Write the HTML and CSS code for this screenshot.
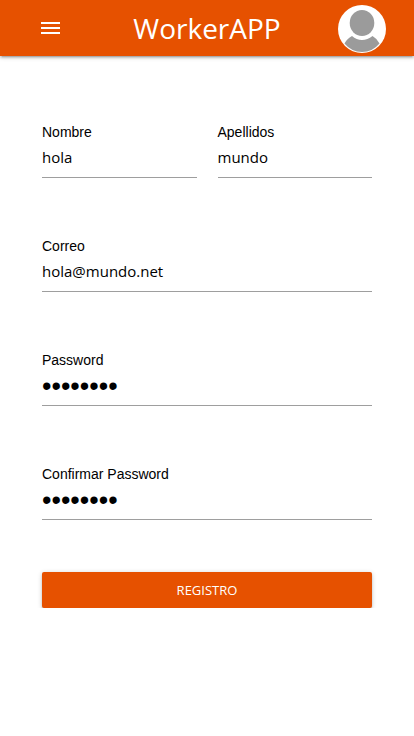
FILE: index.html
```html
<!DOCTYPE html>
<html lang="es">
<head>
<meta charset="utf-8">
<meta name="viewport" content="width=device-width, initial-scale=1">
<title>WorkerAPP</title>
<link rel="stylesheet" href="styles.css">
</head>
<body>
<header class="navbar">
  <button class="menu" type="button" aria-label="Menú">
    <svg viewBox="0 0 24 24" width="24" height="24" shape-rendering="crispEdges"><path fill="currentColor" d="M3 18h19v-2H3zm0-5h19v-2H3zm0-7v2h19V6z"/></svg>
  </button>
  <a class="brand" href="#">WorkerAPP</a>
  <a class="avatar" href="#" aria-label="Perfil">
    <svg viewBox="0 0 48 48" width="48" height="48">
      <circle cx="24" cy="24" r="24" fill="#fff"/>
      <ellipse cx="24" cy="18" rx="12.300" ry="13" fill="#9b9b9b"/>
      <path fill="#9b9b9b" d="M14 31Q18.500 35 24 35T34.500 31Q39 33.500 41.500 38.500Q34.500 47 24 47T6.500 38.500Q9 33.500 14 31Z"/>
    </svg>
  </a>
</header>
<main>
  <form class="form">
    <div class="row">
      <div class="field"><label for="nombre">Nombre</label><input id="nombre" type="text" value="hola"></div>
      <div class="field"><label for="apellidos">Apellidos</label><input id="apellidos" type="text" value="mundo"></div>
    </div>
    <div class="field"><label for="correo">Correo</label><input id="correo" type="email" value="hola@mundo.net"></div>
    <div class="field"><label for="password">Password</label><input id="password" type="password" value="holahola"></div>
    <div class="field"><label for="confirmar">Confirmar Password</label><input id="confirmar" type="password" value="holahola"></div>
    <button class="submit" type="button">REGISTRO</button>
  </form>
</main>
</body>
</html>
```
FILE: styles.css
```css
* { box-sizing: border-box; }
body {
  margin: 0;
  background: #fff;
  color: #000;
  font-family: "Open Sans", "Noto Sans", sans-serif;
}
.navbar {
  display: grid;
  grid-template-columns: 1fr auto 1fr;
  align-items: center;
  height: 56px;
  padding: 0 28px;
  background: #e65100;
  color: #fff;
  box-shadow: 0 2px 2px 0 rgba(0,0,0,.14), 0 3px 1px -2px rgba(0,0,0,.12), 0 1px 5px 0 rgba(0,0,0,.2);
}
.menu {
  justify-self: start;
  padding: 0 10px;
  border: 0;
  background: none;
  color: inherit;
}
.menu svg, .avatar svg { display: block; }
.avatar {
  justify-self: end;
  padding-top: 2px;
}
.brand {
  color: inherit;
  font-size: 28px;
  line-height: 56px;
  text-decoration: none;
}
.form {
  display: flex;
  flex-direction: column;
  gap: 52px;
  padding: 68px 42px 0;
}
.row {
  display: grid;
  grid-template-columns: 1fr 1fr;
  gap: 21px;
}
.field {
  display: flex;
  flex-direction: column;
  min-width: 0;
}
.form > .field { margin-top: 8px; }
.field label {
  font: 14px/16px "Liberation Sans", Arial, sans-serif;
}
.field input {
  width: 100%;
  height: 38px;
  padding: 0 0 4px;
  border: 0;
  border-bottom: 1px solid #9e9e9e;
  border-radius: 0;
  outline: 0;
  background: none;
  color: #000;
  font-family: inherit;
  font-size: 15px;
}
.field input[type="password"] {
  padding: 0;
  font-family: "Liberation Sans", Arial, sans-serif;
  font-size: 27px;
}
.submit {
  height: 36px;
  border: 0;
  border-radius: 2px;
  background: #e65100;
  color: #fff;
  font-family: inherit;
  font-size: 13px;
  box-shadow: 0 2px 2px 0 rgba(0,0,0,.14), 0 3px 1px -2px rgba(0,0,0,.12), 0 1px 5px 0 rgba(0,0,0,.2);
}
```
